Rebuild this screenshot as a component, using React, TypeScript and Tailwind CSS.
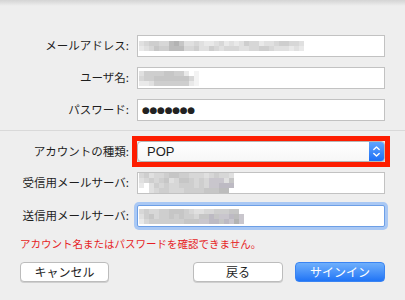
import React from "react";

const PAL: Record<string, string> = {
  "0": "bg-[#f3f3f3]",
  "1": "bg-[#e9e9e9]",
  "2": "bg-[#e0e0e0]",
  "3": "bg-[#d7d7d7]",
  "4": "bg-[#cecece]",
  "5": "bg-[#c6c6c6]",
  "6": "bg-[#bcbcbc]",
  "7": "bg-[#b3b3b3]",
  "8": "bg-[#c9c6cd]",
  "9": "bg-[#bdbac3]",
  ".": "bg-transparent",
};

function Mosaic({ rows }: { rows: string[] }) {
  return (
    <div className="flex flex-col">
      {rows.map((r, i) => (
        <div key={i} className="flex">
          {r.split("").map((c, j) => (
            <div key={j} className={`${PAL[c]} w-[5px] h-[5px]`} />
          ))}
        </div>
      ))}
    </div>
  );
}

const FONT = "font-['Noto_Sans_CJK_JP','Noto_Sans',sans-serif]";

function Row({ label, children, focus = false }: { label: string; children?: React.ReactNode; focus?: boolean }) {
  return (
    <div className="flex items-center h-[22px]">
      <div className="w-[130px] text-right text-[11.5px] text-[#1e1e1e] leading-none pr-[1px]">{label}</div>
      <div
        className={
          focus
            ? "ml-[7px] w-[248px] h-[22px] bg-white border border-[#6d9fe6] rounded-[2px] shadow-[0_0_0_3px_#a9c8f4] flex items-center pl-[1px] overflow-hidden"
            : "ml-[7px] w-[248px] h-[22px] bg-white border border-[#c2c2c2] flex items-center pl-[1px] overflow-hidden"
        }
      >
        {children}
      </div>
    </div>
  );
}

export default function App() {
  return (
    <div className={`w-[405px] h-[300px] bg-[#eeeeee] overflow-hidden ${FONT}`}>
      <div className="h-[6px] bg-gradient-to-b from-[#d4d4d4] to-[#eeeeee]" />
      <div className="mt-[29px] flex flex-col gap-[10px]">
        <Row label="メールアドレス:">
          <Mosaic
            rows={[
              "234433675223211231212433122344332",
              "123544666334224323332233443222121",
            ]}
          />
        </Row>
        <Row label="ユーザ名:">
          <Mosaic rows={["2444455441.0", "344555555530", "112444444410"]} />
        </Row>
        <Row label="パスワード:">
          <span className="text-[9px] tracking-[-0.3px] text-[#222] font-['DejaVu_Sans',sans-serif] pl-[3px] leading-none">●●●●●●●</span>
        </Row>
      </div>
      <div className="mt-[9px] h-[1px] bg-[#d9d9d9]" />
      <div className="mt-[10px] flex items-center h-[21px]">
        <div className="w-[130px] text-right text-[11.5px] text-[#1e1e1e] leading-none pr-[1px]">アカウントの種類:</div>
        <div className="ml-[7px] w-[248px] h-[21px] relative">
          <div className="absolute -left-[5px] -right-[5px] -top-[5px] -bottom-[5px] border-[5px] border-[#fd1d00]" />
          <div className="w-full h-full bg-gradient-to-b from-white to-[#f7f7f7] border border-[#b6b6b6] rounded-[4px] shadow-[0_1px_0_#c8c8c8] flex items-center justify-between overflow-hidden">
            <span className="pl-[9px] text-[13px] text-[#1e1e1e] font-['Liberation_Sans',sans-serif] leading-none">POP</span>
            <div className="w-[15px] h-full bg-gradient-to-b from-[#5fa4fd] to-[#1a6ff6] flex items-center justify-center">
              <svg width="9" height="13" viewBox="0 0 9 13" fill="none" stroke="white" strokeWidth="1.4" strokeLinecap="round" strokeLinejoin="round">
                <path d="M1.8 4.6 L4.5 2 L7.2 4.6" />
                <path d="M1.8 8.4 L4.5 11 L7.2 8.4" />
              </svg>
            </div>
          </div>
        </div>
      </div>
      <div className="mt-[10px] flex flex-col gap-[11px]">
        <Row label="受信用メールサーバ:">
          <Mosaic
            rows={["3423345544333234332.", "2343452355434388825", "1.24343344434388999", "..2344333444455566."]}
          />
        </Row>
        <Row label="送信用メールサーバ:" focus>
          <Mosaic
            rows={["34334455543223344455", "245344545443559588968", "134444444555889959878"]}
          />
        </Row>
      </div>
      <div className="mt-[10px] pl-[20px] text-[10.5px] text-[#e61e26] leading-[14px]">
        アカウント名またはパスワードを確認できません。
      </div>
      <div className="mt-[11px] px-[20px] flex justify-between">
        <button className="w-[89px] h-[20px] bg-white border border-[#bcbcbc] rounded-[4px] shadow-[0_1px_0_#cfcfcf] text-[12px] text-[#1e1e1e] leading-none">
          キャンセル
        </button>
        <div className="flex gap-[12px]">
          <button className="w-[90px] h-[20px] bg-white border border-[#bcbcbc] rounded-[4px] shadow-[0_1px_0_#cfcfcf] text-[12px] text-[#1e1e1e] leading-none">
            戻る
          </button>
          <button className="w-[90px] h-[20px] bg-gradient-to-b from-[#6eaffc] to-[#1f74f5] border border-[#3a84f2] rounded-[4px] text-[12px] text-white leading-none">
            サインイン
          </button>
        </div>
      </div>
    </div>
  );
}
